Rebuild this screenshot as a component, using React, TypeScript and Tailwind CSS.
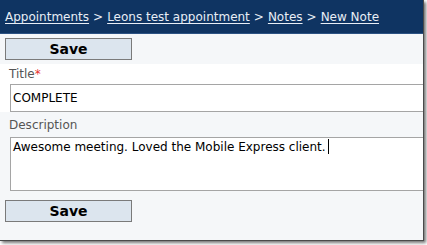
import React from "react";

const crumbs = ["Appointments", "Leons test appointment", "Notes", "New Note"];

function SaveButton() {
  return (
    <button
      type="button"
      className="w-[127px] h-[22px] bg-[#dce5ee] border border-[#7a7a7a] text-[14px] font-bold text-black leading-none"
    >
      Save
    </button>
  );
}

export default function App() {
  return (
    <div className="w-[427px] h-[245px] bg-white font-['DejaVu_Sans',sans-serif]">
      <div className="w-[424px] h-[241px] flex flex-col overflow-hidden bg-[#f5f7f9] border-r border-b border-[#4a4a4a] shadow-[2px_2px_3px_rgba(0,0,0,0.55)]">
        {/* Breadcrumb */}
        <div className="h-[34px] shrink-0 bg-[#0f3462] border-b border-[#2c5283] flex items-end pb-[7px] pl-[5px] text-[12px] text-[#e8eef6] whitespace-nowrap">
          {crumbs.map((c, i) => (
            <span key={c}>
              {i > 0 && <span className="mx-[4px]">&gt;</span>}
              <a href="#" className="underline underline-offset-2">
                {c}
              </a>
            </span>
          ))}
        </div>

        {/* Top save */}
        <div className="h-[30px] shrink-0 pl-[5px] pt-[3px]">
          <SaveButton />
        </div>

        {/* Title */}
        <div className="bg-white shrink-0 pl-[10px]">
          <div className="h-[20px] text-[12px] text-[#555] leading-[20px] -ml-[1px]">
            Title<span className="text-[#e83030]">*</span>
          </div>
          <input
            defaultValue="COMPLETE"
            className="block w-[430px] h-[28px] border border-[#a5a5a5] bg-white px-[2px] text-[12px] text-black outline-none"
          />
        </div>

        {/* Description */}
        <div className="shrink-0 pl-[10px]">
          <div className="h-[25px] text-[12px] text-[#555] leading-[24px] pt-[1px] -ml-[1px]">
            Description
          </div>
          <div
            role="textbox"
            className="w-[430px] h-[54px] border border-[#a5a5a5] bg-white px-[2px] pt-[1px] text-[12px] text-black leading-[16px] whitespace-nowrap"
          >
            Awesome meeting. Loved the Mobile Express client.
            <span className="inline-block w-[1px] h-[15px] bg-black align-[-3px] ml-[2px]" />
          </div>
        </div>

        {/* Bottom save */}
        <div className="pl-[5px] pt-[8px]">
          <SaveButton />
        </div>
      </div>
    </div>
  );
}
